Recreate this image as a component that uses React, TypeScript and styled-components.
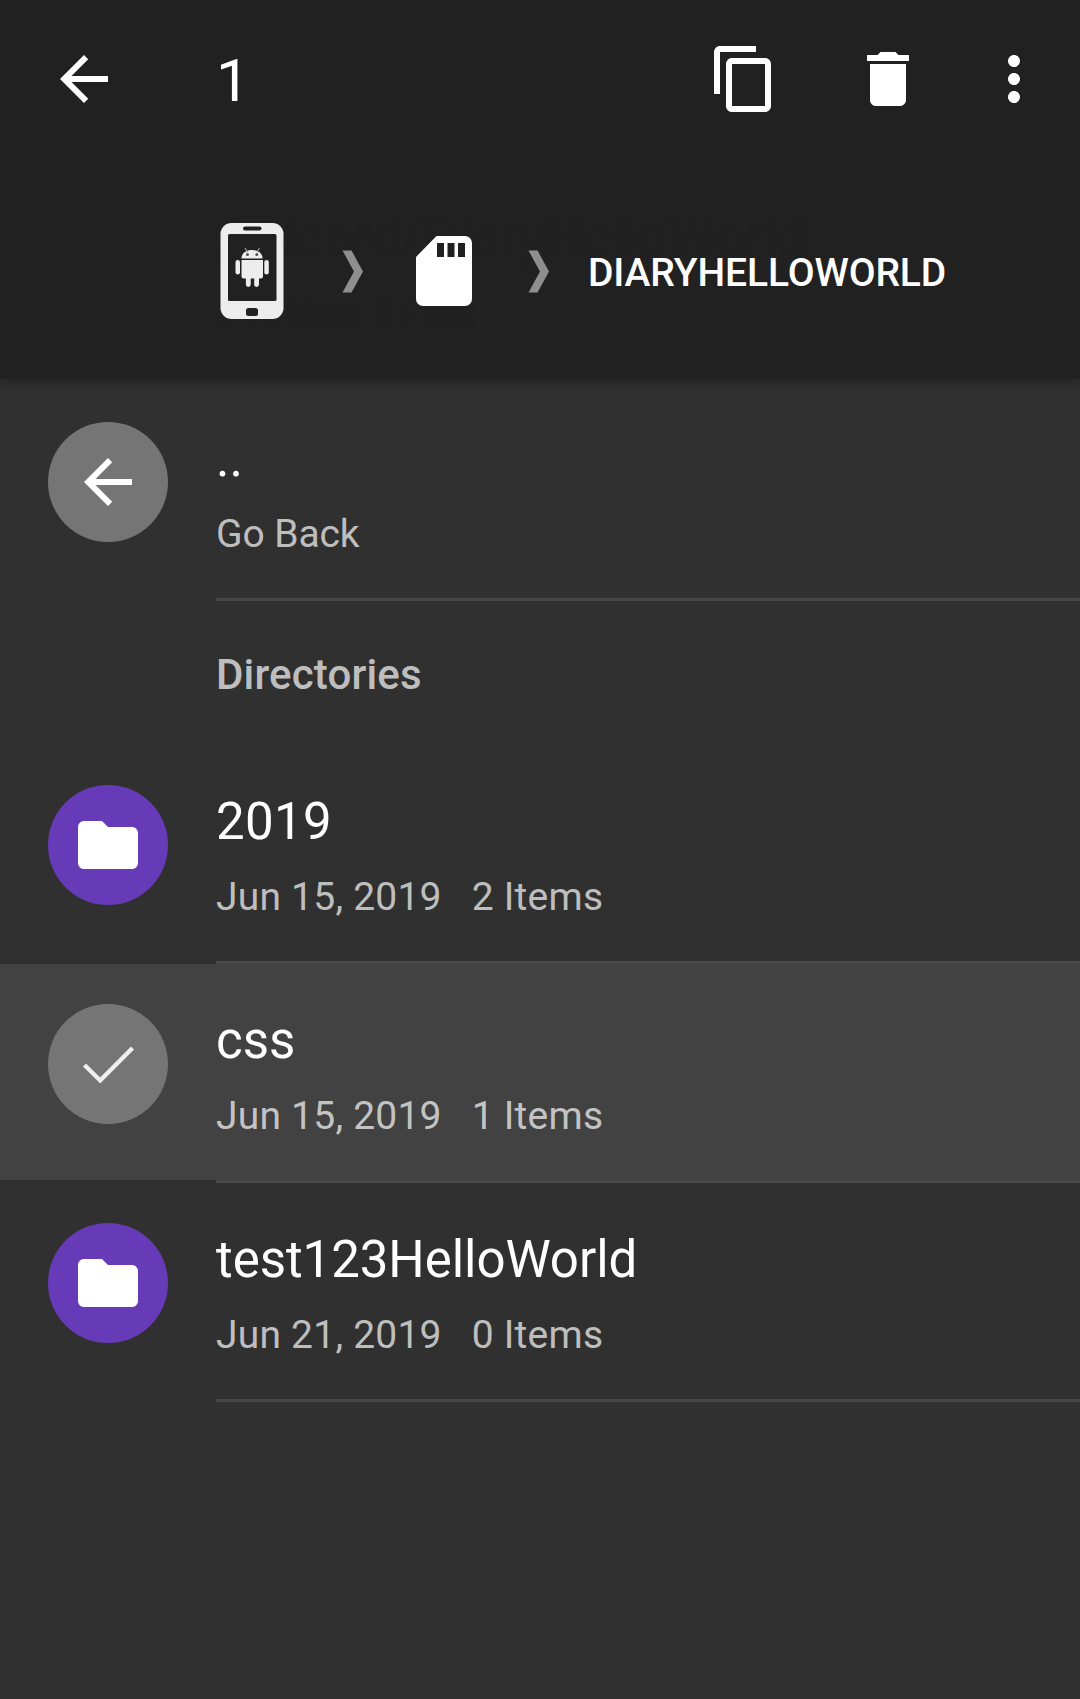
import React from "react";
import styled, { createGlobalStyle } from "styled-components";

const GlobalStyle = createGlobalStyle`
  * { box-sizing: border-box; }
  html, body { margin: 0; background: #303030; }
  body { font-family: Roboto, "Noto Sans", sans-serif; color: #fff; }
`;

const Screen = styled.div`
  display: flex;
  flex-direction: column;
  width: 1080px;
  height: 1699px;
  overflow: hidden;
  background: #303030;
`;

const AppBar = styled.header`
  position: relative;
  flex: none;
  height: 379px;
  background: #212121;
  box-shadow: 0 3px 12px rgba(0, 0, 0, 0.28);
`;

const Toolbar = styled.div`
  display: flex;
  align-items: center;
  height: 158px;
  padding: 0 30px 0 48px;
`;

const Icon = styled.svg`
  display: block;
  flex: none;
  width: 72px;
  height: 72px;
  fill: #fff;
`;

const Count = styled.div`
  flex: 1;
  padding: 4px 0 0 96px;
  font-size: 60px;
  line-height: 70px;
`;

const Actions = styled.div`
  display: flex;
  gap: 72px;
  margin-right: 54px;
`;

const Breadcrumbs = styled.nav`
  position: relative;
  display: flex;
  align-items: center;
  height: 226px;
  padding-left: 220px;
`;

/* Outgoing path summary, almost faded out behind the breadcrumbs */
const FadedPath = styled.div`
  position: absolute;
  top: 217px;
  left: 216px;
  color: #202020;
  white-space: nowrap;
`;

const FadedTitle = styled.div`
  font-size: 54px;
  line-height: 39px;
  letter-spacing: -0.2px;
`;

const FadedCounts = styled.div`
  margin-top: 37px;
  font-size: 36px;
  line-height: 42px;
`;

const PhoneIcon = styled.svg`
  flex: none;
  width: 64px;
  height: 97px;
`;

const Chevron = styled.svg<{ $before: number; $after: number }>`
  flex: none;
  width: 22px;
  height: 43px;
  margin: 0 ${(p) => p.$after}px 0 ${(p) => p.$before}px;
  fill: #8f8f8f;
`;

const CardIcon = styled.svg`
  flex: none;
  width: 56px;
  height: 70px;
  fill: #fff;
`;

const Crumb = styled.span`
  margin-top: 4px;
  font-size: 39px;
  font-weight: 500;
  line-height: 30px;
  letter-spacing: -0.12px;
  white-space: nowrap;
`;

const List = styled.main`
  display: flex;
  flex-direction: column;
  padding-top: 3px;
`;

const Row = styled.div<{ $selected?: boolean }>`
  display: flex;
  height: 219px;
  padding-left: 48px;
  background: linear-gradient(${(p) => (p.$selected ? "#424242" : "#303030")} 216px, #303030 216px);
`;

const Avatar = styled.div<{ $color: string }>`
  display: flex;
  flex: none;
  align-items: center;
  justify-content: center;
  width: 120px;
  height: 120px;
  margin: 40px 48px 0 0;
  border-radius: 50%;
  background: ${(p) => p.$color};
`;

const Details = styled.div`
  flex: 1;
  padding-top: 47px;
  border-bottom: 3px solid #484848;
`;

const Name = styled.div<{ $tracking?: number }>`
  font-size: 51px;
  line-height: 60px;
  letter-spacing: ${(p) => p.$tracking ?? 0}px;
`;

const Meta = styled.div<{ $tracking?: number }>`
  display: flex;
  gap: 30px;
  margin-top: 22px;
  font-size: 39px;
  line-height: 46px;
  letter-spacing: ${(p) => p.$tracking ?? 0}px;
  color: rgba(255, 255, 255, 0.7);
`;

const Section = styled.h2`
  height: 144px;
  margin: 0;
  padding-left: 216px;
  font-size: 42px;
  font-weight: 500;
  line-height: 148px;
  letter-spacing: 0.15px;
  color: rgba(255, 255, 255, 0.7);
`;

const paths = {
  back: "M20 11H7.83l5.59-5.59L12 4l-8 8 8 8 1.41-1.41L7.83 13H20v-2z",
  copy: "M16 1H4c-1.1 0-2 .9-2 2v14h2V3h12V1zm3 4H8c-1.1 0-2 .9-2 2v14c0 1.1.9 2 2 2h11c1.1 0 2-.9 2-2V7c0-1.1-.9-2-2-2zm0 16H8V7h11v14z",
  trash: "M6 19c0 1.1.9 2 2 2h8c1.1 0 2-.9 2-2V7H6v12zM19 4h-3.5l-1-1h-5l-1 1H5v2h14V4z",
  more: "M12 8c1.1 0 2-.9 2-2s-.9-2-2-2-2 .9-2 2 .9 2 2 2zm0 2c-1.1 0-2 .9-2 2s.9 2 2 2 2-.9 2-2-.9-2-2-2zm0 6c-1.1 0-2 .9-2 2s.9 2 2 2 2-.9 2-2-.9-2-2-2z",
  folder: "M10 4H4c-1.1 0-1.99.9-1.99 2L2 18c0 1.1.9 2 2 2h16c1.1 0 2-.9 2-2V8c0-1.1-.9-2-2-2h-8l-2-2z",
};

const Glyph = ({ name }: { name: keyof typeof paths }) => (
  <Icon viewBox="0 0 24 24">
    <path d={paths[name]} />
  </Icon>
);

const Check = () => (
  <Icon viewBox="0 0 72 72">
    <path d="M12.5 37L28.2 52.5L60.5 20" fill="none" stroke="#eee" strokeWidth="4.4" />
  </Icon>
);

const Phone = () => (
  <PhoneIcon viewBox="0 0 64 97">
    <rect x="0.5" y="0" width="63" height="96" rx="11" fill="#ededed" />
    <g fill="#212121">
      <rect x="23" y="3.5" width="18.5" height="4" rx="2" />
      <rect x="8" y="11" width="48.5" height="67" rx="1.5" />
      <rect x="26" y="85" width="12" height="8" rx="2.5" />
    </g>
    <g fill="#ededed">
      <path d="M21.5 35.5c0-5 4-8.5 10.5-8.5s10.5 3.5 10.5 8.5z" />
      <path d="M21.5 37h21.5v16.5q0 2-2 2h-2v6a2.4 2.4 0 0 1-4.8 0v-6h-3.5v6a2.4 2.4 0 0 1-4.8 0v-6h-2.4q-2 0-2-2z" />
      <rect x="15.5" y="37" width="4.5" height="14.5" rx="2.2" />
      <rect x="44.3" y="37" width="4.5" height="14.5" rx="2.2" />
    </g>
    <path d="M25 25l2.5 4M39.5 25l-2.5 4" stroke="#9a9a9a" strokeWidth="1.2" />
    <circle cx="27.5" cy="31.5" r="1.5" fill="#555" />
    <circle cx="36.8" cy="31.5" r="1.5" fill="#555" />
  </PhoneIcon>
);

const Separator = ({ before, after }: { before: number; after: number }) => (
  <Chevron $before={before} $after={after} viewBox="0 0 22 43">
    <path d="M0.5 0.5h9L21 21.5L9.5 42.5H0.5L12 21.5z" />
  </Chevron>
);

type Entry = { name: string; date: string; items: string; selected?: boolean; tracking?: number };

const entries: Entry[] = [
  { name: "2019", date: "Jun 15, 2019", items: "2 Items", tracking: 0.35 },
  { name: "css", date: "Jun 15, 2019", items: "1 Items", selected: true },
  { name: "test123HelloWorld", date: "Jun 21, 2019", items: "0 Items", tracking: -0.05 },
];

export default function App() {
  return (
    <Screen>
      <GlobalStyle />
      <AppBar>
        <FadedPath aria-hidden>
          <FadedTitle>/sdcard/DiaryHelloWorld</FadedTitle>
          <FadedCounts>3 Folders 0 Files</FadedCounts>
        </FadedPath>
        <Toolbar>
          <Glyph name="back" />
          <Count>1</Count>
          <Actions>
            <Glyph name="copy" />
            <Glyph name="trash" />
          </Actions>
          <Glyph name="more" />
        </Toolbar>
        <Breadcrumbs>
          <Phone />
          <Separator before={58} after={52} />
          <CardIcon viewBox="0 0 56 70">
            <path fillRule="evenodd" d="M20.5 0H49a7 7 0 0 1 7 7v56a7 7 0 0 1-7 7H7a7 7 0 0 1-7-7V21zM21 7v14h7V7zM31.5 7v14h7V7zM42 7v14h7V7z" />
          </CardIcon>
          <Separator before={56} after={38} />
          <Crumb>DIARYHELLOWORLD</Crumb>
        </Breadcrumbs>
      </AppBar>
      <List>
        <Row>
          <Avatar $color="#757575">
            <Glyph name="back" />
          </Avatar>
          <Details>
            <Name>..</Name>
            <Meta $tracking={-0.1}>Go Back</Meta>
          </Details>
        </Row>
        <Section>Directories</Section>
        {entries.map((e) => (
          <Row key={e.name} $selected={e.selected}>
            <Avatar $color={e.selected ? "#757575" : "#673ab7"}>
              {e.selected ? <Check /> : <Glyph name="folder" />}
            </Avatar>
            <Details>
              <Name $tracking={e.tracking}>{e.name}</Name>
              <Meta $tracking={0.22}>
                <span>{e.date}</span>
                <span>{e.items}</span>
              </Meta>
            </Details>
          </Row>
        ))}
      </List>
    </Screen>
  );
}
